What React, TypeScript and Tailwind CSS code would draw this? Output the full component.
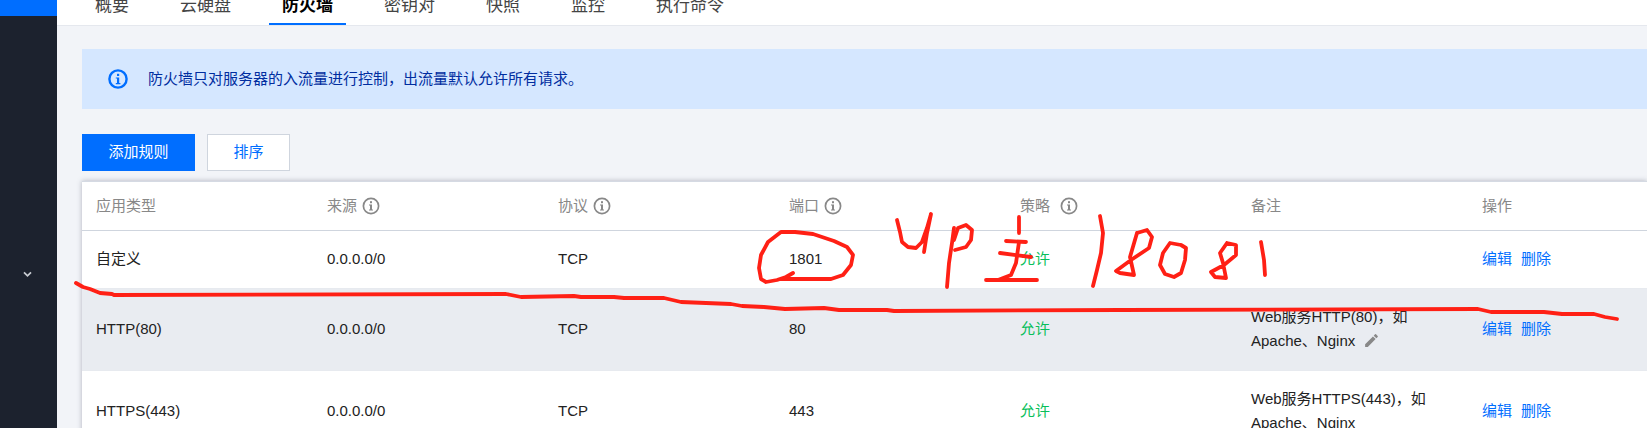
const tabs = ["概要", "云硬盘", "防火墙", "密钥对", "快照", "监控", "执行命令"]

const rows = [
  { type: "自定义", port: "1801", height: "h-[58px]", bg: "bg-white", note: null },
  { type: "HTTP(80)", port: "80", height: "h-[82px]", bg: "bg-[#e9ecf1]", note: ["Web服务HTTP(80)，如", "Apache、Nginx"], edit: true },
  { type: "HTTPS(443)", port: "443", height: "h-[82px]", bg: "bg-white", note: ["Web服务HTTPS(443)，如", "Apache、Nginx"] },
]

// red pen marks scribbled over the screenshot
const strokes = [
  "76,283 83,287 90,289 100,293 112,294 114,295 506,294 521,297 574,296 581,297 614,297 624,298 664,298 681,302 731,304 742,306 764,307 785,309 824,308 839,310 887,310 894,311 1120,310 1478,309 1491,312 1544,312 1562,314 1594,314 1605,317 1617,319",
  "793,273 786,277 777,280 766,282 761,279 759,268 761,255 768,242 781,232 795,232 813,234 834,241 847,247 853,255 851,265 843,275 831,279 781,279",
  "897,220 900,232 902,242 908,247 916,248 922,242 927,228 931,214 927,233 924,252",
  "954,228 952,243 949,263 947,287",
  "954,240 958,228 966,225 972,230 971,240 966,247 955,250",
  "1019,217 1019,233",
  "1006,241 1026,242",
  "1000,253 1031,257",
  "1019,242 1016,263 1011,275 998,280",
  "986,280 1037,280",
  "1100,216 1103,233 1101,253 1097,270 1093,286",
  "1137,233 1147,230 1152,237 1149,248 1131,260 1116,271 1120,273 1134,275 1130,257 1137,233",
  "1181,245 1170,243 1163,253 1160,265 1165,274 1174,277 1181,273 1185,260 1186,248 1181,245",
  "1227,243 1236,245 1236,255 1224,265 1211,272 1215,277 1226,278 1223,263 1220,253 1227,243",
  "1261,242 1264,260 1265,275",
]

function InfoIcon({ className = "" }: { className?: string }) {
  return (
    <svg viewBox="0 0 18 18" className={`w-[18px] h-[18px] text-[#888888] ${className}`} fill="none">
      <circle cx="9" cy="9" r="7.6" stroke="currentColor" strokeWidth="1.7" />
      <rect x="8" y="4.2" width="2" height="2" fill="currentColor" />
      <path d="M7 7.6h3v5h1v1H7v-1h1V8.6H7z" fill="currentColor" />
    </svg>
  )
}

function HeaderCell({ label, info, gap = "ml-[5px]" }: { label: string; info?: boolean; gap?: string }) {
  return (
    <div className="flex items-center text-[#888888]">
      {label}
      {info && <InfoIcon className={gap} />}
    </div>
  )
}

export default function App() {
  return (
    <div
      className="relative flex w-[1647px] h-[428px] overflow-hidden bg-[#f2f4f8] text-[15px] text-[#222222]"
      style={{ fontFamily: '"Liberation Sans", "Noto Sans CJK SC", sans-serif' }}
    >
      {/* Sidebar */}
      <div className="w-[57px] shrink-0 bg-[#1c222e]">
        <div className="h-4 bg-[#006eff]" />
        <div className="flex justify-center pt-[255px] pr-[3px]">
          <svg viewBox="0 0 10 8" className="w-[9px] h-[7px] text-[#c8ccd2]" fill="none">
            <path d="M1 1.5l4 4 4-4" stroke="currentColor" strokeWidth="2" />
          </svg>
        </div>
      </div>

      <div className="flex-1 min-w-0">
        {/* Tabs */}
        <div className="flex items-end gap-[25px] h-[25px] pl-[25px] bg-white border-b border-[#e5e8ee] box-content -mb-[1px]">
          {tabs.map((tab) => {
            const active = tab === "防火墙"
            return (
              <div
                key={tab}
                className={`px-[13px] pb-[5px] leading-[24px] text-[17px] border-b-2 ${
                  active ? "border-[#006eff] font-bold text-black" : "border-transparent text-[#444444]"
                }`}
              >
                {tab}
              </div>
            )
          })}
        </div>

        <div className="pl-[25px] pt-[24px]">
          {/* Notice */}
          <div className="flex items-center h-[60px] pl-[26px] bg-[#d5e7ff] text-[#002da0]">
            <svg viewBox="0 0 20 20" className="w-5 h-5 text-[#006eff]" fill="none">
              <circle cx="10" cy="10" r="8.6" stroke="currentColor" strokeWidth="2.4" />
              <rect x="9" y="4.8" width="2.2" height="2.2" fill="currentColor" />
              <path d="M7.8 8.4h3.4v5.6h1.2v1.2H7.8V14h1.2V9.6H7.8z" fill="currentColor" />
            </svg>
            <span className="ml-[20px]">防火墙只对服务器的入流量进行控制，出流量默认允许所有请求。</span>
          </div>

          {/* Actions */}
          <div className="flex gap-3 mt-[25px]">
            <button className="w-[113px] h-[37px] bg-[#006eff] text-white">添加规则</button>
            <button className="w-[83px] h-[37px] bg-white border border-[#cfd5de] text-[#006eff]">排序</button>
          </div>

          {/* Rules table */}
          <div className="mt-[10px] bg-white border-t border-[#d5dae3] shadow-[0_0_5px_rgba(54,58,80,0.35)]">
            <div className="grid grid-cols-[231px_231px_231px_231px_231px_231px_1fr] items-center h-[49px] pl-[14px] border-b border-[#cfd5de]">
              <HeaderCell label="应用类型" />
              <HeaderCell label="来源" info />
              <HeaderCell label="协议" info />
              <HeaderCell label="端口" info />
              <HeaderCell label="策略" info gap="ml-[10px]" />
              <HeaderCell label="备注" />
              <HeaderCell label="操作" />
            </div>
            {rows.map((row) => (
              <div
                key={row.type}
                className={`grid grid-cols-[231px_231px_231px_231px_231px_231px_1fr] items-center pl-[14px] border-b border-[#e7eaef] ${row.height} ${row.bg}`}
              >
                <div>{row.type}</div>
                <div>0.0.0.0/0</div>
                <div>TCP</div>
                <div>{row.port}</div>
                <div className="text-[#0abf5b]">允许</div>
                <div className="leading-[24px] mb-[2px]">
                  {row.note?.map((line, i) => (
                    <div key={line} className="flex items-center">
                      {line}
                      {row.edit && i === 1 && (
                        <svg viewBox="0 0 24 24" className="w-[17px] h-[17px] ml-[8px] text-[#888888]" fill="currentColor">
                          <path d="M3 17.25V21h3.75L17.81 9.94l-3.75-3.75L3 17.25zM20.71 7.04a1 1 0 0 0 0-1.41l-2.34-2.34a1 1 0 0 0-1.41 0l-1.83 1.83 3.75 3.75 1.83-1.83z" />
                        </svg>
                      )}
                    </div>
                  ))}
                </div>
                <div className="flex gap-[9px] text-[#006eff]">
                  <span>编辑</span>
                  <span>删除</span>
                </div>
              </div>
            ))}
          </div>
        </div>
      </div>

      {/* Pen annotation on top of the page */}
      <svg className="absolute inset-0 w-full h-full pointer-events-none" viewBox="0 0 1647 428" fill="none">
        {strokes.map((points) => (
          <polyline
            key={points}
            points={points}
            stroke="#ff2015"
            strokeWidth="3.8"
            strokeLinecap="round"
            strokeLinejoin="round"
          />
        ))}
      </svg>
    </div>
  )
}
